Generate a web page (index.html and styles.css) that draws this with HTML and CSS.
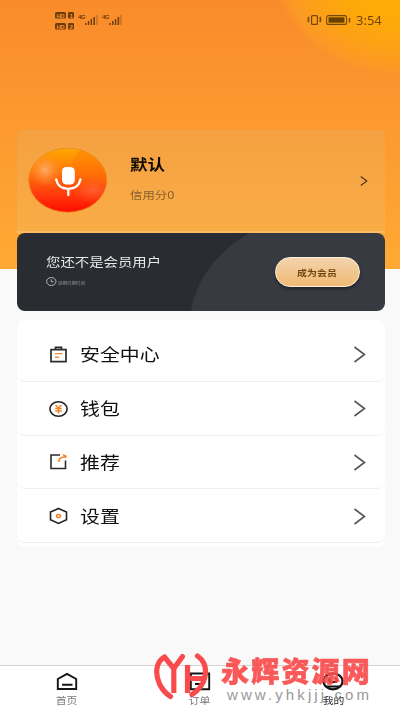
FILE: index.html
```html
<!DOCTYPE html>
<html lang="zh-CN">
<head>
<meta charset="utf-8">
<title>我的</title>
<link rel="stylesheet" href="styles.css">
</head>
<body>
<div class="screen">
  <header class="hero">
    <div class="glow"></div>
    <div class="status">
      <svg class="signals" width="70" height="22" viewBox="0 0 70 22">
        <g fill="#6b3c0c">
          <rect x="0" y="1" width="11" height="6.6" rx="1.6"/><rect x="13" y="1" width="6" height="6.6" rx="1.4"/>
          <rect x="0" y="12" width="11" height="6.6" rx="1.6"/><rect x="13" y="12" width="6" height="6.6" rx="1.4"/>
        </g>
        <g class="tiny-badge">
          <text x="1.5" y="6.6" textLength="8">HD</text><text x="14.5" y="6.6">1</text>
          <text x="1.5" y="17.6" textLength="8">HD</text><text x="14.5" y="17.6">2</text>
        </g>
        <g class="tiny-net"><text x="23" y="8.4" textLength="7.5">4G</text><text x="47" y="8.4" textLength="7.5">4G</text></g>
        <g fill="#70400d">
          <path d="M30 12h1.5v2H30zM32.8 10h1.5v4h-1.5zM35.6 8h1.5v6h-1.5zM38.4 6h1.6v8h-1.6zM54.200 12h1.500v2h-1.500zM57 10h1.500v4H57zM59.800 8h1.500v6h-1.500zM62.600 6h1.600v8h-1.600z"/>
          <path opacity=".4" d="M41.300 4h1.300v10h-1.300zM65.300 4h1.300v10h-1.300z"/>
        </g>
      </svg>
      <div class="status-right">
        <svg width="44" height="12" viewBox="0 0 44 12" fill="none" stroke="#754707">
          <rect x="4.600" y="1.600" width="5.800" height="8.800" rx="1"  stroke-width="1.200"/>
          <path d="M.8 3l1.200 1.200L.8 5.500 2 6.800.8 8M14 3l-1.200 1.200L14 5.500l-1.200 1.300L14 8" stroke-width="1.200"/>
          <rect x="19.600" y="1.600" width="20" height="8.800" rx="2" stroke-width="1.100"/>
          <rect x="21.500" y="3.300" width="16" height="5.400" fill="#674000" stroke="none"/>
          <path d="M42.500 4v4.500" stroke-width="1.500"/>
        </svg>
        <span class="clock">3:54</span>
      </div>
    </div>
  </header>

  <main class="content">
    <section class="profile">
      <svg class="avatar" width="80" height="66" viewBox="0 0 80 66">
        <defs>
          <linearGradient id="ball" x1="0" y1="0" x2="0" y2="1">
            <stop offset="0" stop-color="#ffa800"/><stop offset=".35" stop-color="#ff7a08"/><stop offset=".72" stop-color="#ff3a0c"/><stop offset="1" stop-color="#ff0c00"/>
          </linearGradient>
          <radialGradient id="shine"><stop offset="0" stop-color="#ffb070" stop-opacity=".9"/><stop offset="1" stop-color="#ff8a30" stop-opacity="0"/></radialGradient>
          <radialGradient id="blush"><stop offset="0" stop-color="#ff6a3c" stop-opacity=".75"/><stop offset="1" stop-color="#ff5020" stop-opacity="0"/></radialGradient>
          <clipPath id="oval"><ellipse cx="39.700" cy="32.300" rx="39" ry="32"/></clipPath>
        </defs>
        <ellipse cx="39.700" cy="32.300" rx="39" ry="32" fill="url(#ball)" stroke="#e58a1e" stroke-width=".8"/>
        <g clip-path="url(#oval)">
          <ellipse cx="17" cy="22" rx="17" ry="17" fill="url(#shine)"/>
          <ellipse cx="65" cy="42" rx="20" ry="14" fill="url(#blush)"/>
          <ellipse cx="66" cy="18" rx="22" ry="20" fill="#ff6a08" opacity=".3"/>
        </g>
        <rect x="34" y="19" width="12.800" height="17.500" rx="4.500" fill="#fff"/>
        <path d="M28.200 31.500c1.200 6.200 6 9.300 12.100 9.300s10.900-3.100 12.100-9.300M40.300 41v6" fill="none" stroke="#fff" stroke-width="2.300" stroke-linecap="round"/>
      </svg>
      <div class="who">
        <h1 class="name">默认</h1>
        <p class="credit">信用分0</p>
      </div>
      <svg class="more" width="8" height="10" viewBox="0 0 8 10"><path d="M.8.6l6 4.400-6 4.400" fill="none" stroke="#4c3a22" stroke-width="1.200"/></svg>
    </section>

    <section class="member">
      <div class="member-text">
        <h2 class="member-title">您还不是会员用户</h2>
        <div class="expiry">
          <svg width="11" height="9" viewBox="0 0 11 9" fill="none" stroke="#c3c5c8" stroke-width=".9"><ellipse cx="5.300" cy="4.500" rx="4.700" ry="4"/><path d="M5.200 2.300v2.400h2.400"/></svg>
          <span>到期日期时间</span>
        </div>
      </div>
      <button class="join"><span>成为会员</span></button>
    </section>

    <nav class="menu">
      <a class="row">
        <svg class="icon" width="20" height="18" viewBox="0 0 20 18" fill="none" stroke="#2b2b2e" stroke-width="1.700"><path d="M2 3.600h15v12H2zM6.500 3.500V1.300h6v2.200"/><path d="M6 7.600h7.500M6 11.300h4" stroke="#f0883a" stroke-width="1.400"/></svg>
        <span class="label">安全中心</span>
        <svg class="arrow" width="12" height="17" viewBox="0 0 12 17"><path d="M.5 1l10 7.500-10 7.500"/></svg>
      </a>
      <a class="row">
        <svg class="icon" width="20" height="18" viewBox="0 0 20 18" fill="none" stroke="#232326" stroke-width="1.600"><ellipse cx="9.500" cy="9" rx="8.600" ry="7.300"/><path d="M6.500 5l3 3 3-3M9.500 8v5.500M6.300 8.500h6.400M6.300 11h6.400" stroke="#f08420" stroke-width="1.400"/></svg>
        <span class="label">钱包</span>
        <svg class="arrow" width="12" height="17" viewBox="0 0 12 17"><path d="M.5 1l10 7.500-10 7.500"/></svg>
      </a>
      <a class="row">
        <svg class="icon" width="20" height="18" viewBox="0 0 20 18" fill="none" stroke="#2b2b2e" stroke-width="1.600"><path d="M11 2H2v13.500h14.500V7.500"/><path d="M9.800 9c-.2-3.500 2-5 7.200-5M14 1.600l3.600 2.200" stroke="#f08428" stroke-width="1.600"/></svg>
        <span class="label">推荐</span>
        <svg class="arrow" width="12" height="17" viewBox="0 0 12 17"><path d="M.5 1l10 7.500-10 7.500"/></svg>
      </a>
      <a class="row">
        <svg class="icon" width="20" height="18" viewBox="0 0 20 18" fill="none" stroke="#232326" stroke-width="1.600"><path d="M9.500 1.500l8 3.600v7.600l-8 3.700-8-3.700V5.100z"/><ellipse cx="9.500" cy="9" rx="2" ry="1.600" stroke="#f08428" stroke-width="1.500"/></svg>
        <span class="label">设置</span>
        <svg class="arrow" width="12" height="17" viewBox="0 0 12 17"><path d="M.5 1l10 7.500-10 7.500"/></svg>
      </a>
    </nav>
  </main>

  <footer class="tabs">
    <a class="tab">
      <svg width="22" height="19" viewBox="0 0 22 19" fill="none" stroke="#151515" stroke-width="1.900"><path d="M1.800 7L11 1.800 20.200 7v10H1.800zM6 12.800h10.500"/></svg>
      <span>首页</span>
    </a>
    <a class="tab">
      <svg width="22" height="19" viewBox="0 0 22 19" fill="none" stroke="#151515" stroke-width="1.900"><path d="M1.800 1.500h18.400v15.700H1.800zM6 7.500h10.500M6 12h8"/></svg>
      <span>订单</span>
    </a>
    <a class="tab active">
      <svg width="22" height="19" viewBox="0 0 22 19" fill="none" stroke="#151515" stroke-width="2.200"><ellipse cx="11" cy="9.300" rx="9.500" ry="8"/><path d="M7.500 6v4M14.500 6v4M7 10h8M4 14.500h14"/></svg>
      <span>我的</span>
    </a>
  </footer>

  <div class="watermark">
    <svg class="mark" width="56" height="49" viewBox="0 0 56 49" fill="none" stroke="#f94b4c" stroke-width="5.200" stroke-linecap="round" stroke-linejoin="round">
      <path d="M10.500 5C1.500 10 1 22 5.500 32c3 6 6 9.500 11 12.500M10.500 5L19.800 16.500 28.500 4.500"/>
      <path d="M19.800 16.500V41" stroke-linecap="butt"/>
      <path d="M33.500 13v28M33.500 26.500h17" stroke-linecap="butt"/>
      <path d="M43.500 4c7 5 9.300 13 7.300 21.500-1.800 8-6.500 13-12.800 17"/>
    </svg>
    <div class="brand">
      <strong>永辉资源网</strong>
      <span class="url">www.yhkjjj.com</span>
    </div>
  </div>
</div>
</body>
</html>
```
FILE: styles.css
```css
* { box-sizing: border-box; }

body {
  margin: 0;
  font-family: "Noto Sans", "Noto Sans CJK SC", sans-serif;
  background: #f9f9f9;
}

h1, h2, p { margin: 0; }

.screen {
  position: relative;
  display: flex;
  flex-direction: column;
  width: 400px;
  height: 711px;
  overflow: hidden;
  background: #f9f9f9;
}

.hero {
  position: relative;
  flex: none;
  height: 269px;
  margin-bottom: -139px;
  overflow: hidden;
  background: linear-gradient(#f98b2b, #fc9a2f 48%, #ffa934);
}

.glow {
  position: absolute;
  top: -140px;
  left: 278px;
  width: 250px;
  height: 214px;
  border-radius: 50%;
  background: radial-gradient(ellipse 125px 107px at 50% 50%, #ffac04, #ffaa08 50%, #fca018 80%, #fb972a 100%);
  filter: blur(3px);
}

.status {
  position: relative;
  display: flex;
  justify-content: space-between;
  padding: 11px 18px 0 55px;
}

.tiny-badge { font: bold 6px "Liberation Sans", sans-serif; fill: #f9912c; }
.tiny-net { font: bold 6px "Liberation Sans", sans-serif; fill: #70400d; }

.status-right {
  display: flex;
  gap: 5px;
  padding-top: 3px;
}

.clock {
  width: 26px;
  font: 12px/14px "Noto Sans", sans-serif;
  color: #754707;
  transform: scaleX(1.08);
  transform-origin: left;
}

.content {
  position: relative;
  display: flex;
  flex-direction: column;
  width: 368px;
  margin-left: 16.500px;
}

.profile {
  display: flex;
  align-items: flex-start;
  height: 103px;
  padding: 18px 17px 0 11px;
  border-radius: 5px 5px 0 0;
  border-bottom: 2px solid #fdba67;
  background: linear-gradient(#f5a041, #f9ad45);
}

.who { flex: 1; padding: 7px 0 0 22px; }

.name,
.credit,
.member-title,
.expiry span,
.join span,
.label,
.tab span { white-space: nowrap; }

.name {
  font-size: 15px;
  line-height: 18px;
  color: #100b05;
  transform: scaleX(1.17);
  transform-origin: left;
}

.credit {
  margin-top: 15px;
  font-size: 10.500px;
  line-height: 14px;
  color: #856035;
  transform: scaleX(1.18);
  transform-origin: left;
}

.more { margin-top: 28px; }

.member {
  display: flex;
  justify-content: space-between;
  height: 78px;
  padding: 21px 25px 0 29px;
  border-radius: 8px;
  background: radial-gradient(ellipse 134px 113px at 306px 94px, #373a41 99%, #292c30 100%);
}

.member-title {
  font-size: 12.300px;
  font-weight: 400;
  line-height: 18px;
  color: #e8e9ea;
  transform: scaleX(1.17);
  transform-origin: left;
}

.expiry {
  display: flex;
  align-items: center;
  gap: 1px;
  margin-top: 4px;
  height: 10px;
}

.expiry span {
  padding-top: 4px;
  font-size: 4px;
  line-height: 5px;
  color: #96989b;
  transform: scaleX(1.13);
  transform-origin: left;
}

.join {
  width: 85px;
  height: 30px;
  margin-top: 3px;
  padding: 0;
  border: 1.500px solid #fff0dc;
  border-radius: 15px;
  font: bold 8.500px/24px "Noto Sans CJK SC", sans-serif;
  color: #74460f;
  background: linear-gradient(#f3d3ac, #f0ba75);
  box-shadow: 0 2px 3px #22242a;
}

.join span { display: inline-block; transform: scaleX(1.17); }

.menu {
  height: 227px;
  margin-top: 9px;
  padding-top: 8px;
  border-radius: 8px;
  background: #fff;
}

.row {
  display: flex;
  align-items: center;
  height: 53.800px;
  padding: 1px 18.500px 0 32.500px;
  border-bottom: 1px solid #f0f0f0;
  border-radius: 8px;
}

.label {
  flex: 1;
  padding: 1px 0 0 11px;
  font-size: 17px;
  line-height: 24px;
  color: #101010;
  transform: scaleX(1.17);
  transform-origin: 11px 50%;
}

.arrow { fill: none; stroke: #555; stroke-width: 1.600; }

.tabs {
  display: flex;
  flex: none;
  height: 46px;
  margin-top: auto;
  border-top: 1px solid #d4d4d4;
  background: #fff;
}

.tab {
  display: flex;
  flex: 1;
  flex-direction: column;
  align-items: center;
  padding-top: 6px;
}

.tab span {
  margin-top: 3px;
  font-size: 9.500px;
  line-height: 14px;
  color: #777;
  transform: scaleX(1.14);
}

.tab.active span { color: #222; }

.watermark {
  position: absolute;
  top: 652px;
  left: 154px;
  display: flex;
}

.brand {
  display: flex;
  flex-direction: column;
  padding: 3px 0 0 11px;
}

.brand strong {
  font: 900 28px/31px "Noto Sans CJK SC", sans-serif;
  letter-spacing: 2.200px;
  color: #f94b4c;
  opacity: .92;
  -webkit-text-stroke: .6px #f94b4c;
}

.url {
  margin: 0 0 0 6px;
  font: 15px/18px "Liberation Sans", sans-serif;
  letter-spacing: 3.100px;
  color: #999;
}
```
